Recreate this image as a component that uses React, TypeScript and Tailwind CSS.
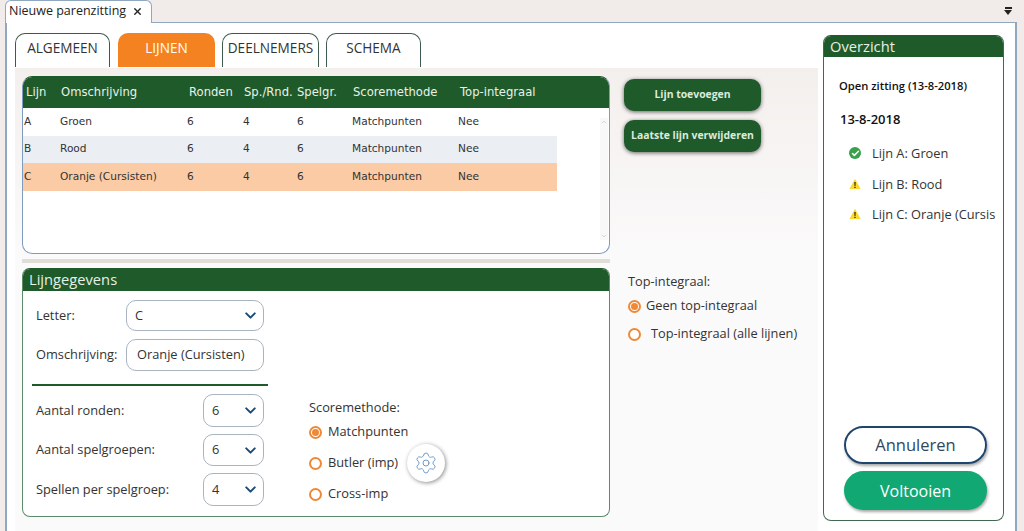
import { Check, ChevronDown, ChevronUp, Settings, X } from "lucide-react";

const sans = "font-['Open_Sans',sans-serif]";
const deja = "font-['DejaVu_Sans',sans-serif]";

const rows = [
  { id: "A", name: "Groen", bg: "bg-white" },
  { id: "B", name: "Rood", bg: "bg-[#ebeff3]" },
  { id: "C", name: "Oranje (Cursisten)", bg: "bg-[#fbcba5]" },
];

const Tab = ({ label, active, width }: { label: string; active?: boolean; width: string }) => (
  <div
    className={`${width} h-[34px] flex items-center justify-center pb-[4px] rounded-t-[10px] text-[13.6px] ${
      active
        ? "bg-[#f58220] text-white"
        : "bg-white text-[#333] border border-b-0 border-[#3f5a4c]"
    }`}
  >
    {label}
  </div>
);

const Select = ({ value, width, height }: { value: string; width: string; height: string }) => (
  <div
    className={`${width} ${height} flex items-center justify-between pl-2 pr-[4px] bg-white rounded-[10px] border border-[#a9b4c0] text-[12.8px] text-[#333]`}
  >
    <span>{value}</span>
    <ChevronDown size={17} strokeWidth={2.8} className="text-[#1c4a78]" />
  </div>
);

const Radio = ({ checked }: { checked?: boolean }) => (
  <span className="w-[13px] h-[13px] shrink-0 rounded-full border-2 border-[#ee8a37] bg-white flex items-center justify-center">
    {checked && <span className="w-[7px] h-[7px] rounded-full bg-[#ee8a37]" />}
  </span>
);

const Warning = () => (
  <svg width="12" height="12" viewBox="0 0 12 12" className="shrink-0">
    <path d="M6 .8 11.6 11H.4Z" fill="#fbd92f" />
    <path d="M5.3 4h1.4l-.2 4h-1ZM5.3 8.8h1.4v1.3H5.3Z" fill="#332b00" />
  </svg>
);

const GreenButton = ({ label }: { label: string }) => (
  <div className="w-[137px] h-8 flex items-center justify-center rounded-[10px] bg-[#1f5a2b] text-[#dcebdc] text-[10.4px] font-bold shadow-[0_1px_4px_rgba(0,0,0,0.6)]">
    {label}
  </div>
);

export default function App() {
  return (
    <div className={`${sans} w-[1024px] h-[531px] overflow-hidden bg-[#f1ece9] flex flex-col`}>
      {/* window tab strip */}
      <div className="h-[22px] shrink-0 flex justify-between pl-[5px] pr-[12px]">
        <div className="w-[147px] h-[23px] z-10 flex items-center gap-[6px] pl-[3px] pb-[2px] bg-white border border-b-0 border-[#8fa8c0] rounded-t-[6px] text-[12.5px] text-[#222]">
          <span>Nieuwe parenzitting</span>
          <X size={11} strokeWidth={3} className="text-[#222]" />
        </div>
        <div className="flex flex-col items-center pt-[7px] gap-px">
          <span className="w-[7px] h-[2px] bg-[#222]" />
          <span className="w-0 h-0 border-x-[4px] border-x-transparent border-t-[5px] border-t-[#222]" />
        </div>
      </div>

      <div className="ml-[5px] w-[1012px] flex-1 min-h-0 flex bg-white border-x-2 border-t border-[#8fa8c0]">
        <div className="w-[811px] shrink-0 flex flex-col">
          <div className="h-[45px] shrink-0 flex items-end pl-2 pb-px">
            <Tab label="ALGEMEEN" width="w-[95px]" />
            <div className="ml-[8px]">
              <Tab label="LIJNEN" width="w-[97px]" active />
            </div>
            <div className="ml-[7px] flex gap-[7px]">
              <Tab label="DEELNEMERS" width="w-[97px]" />
              <Tab label="SCHEMA" width="w-[95px]" />
            </div>
          </div>

          <div className="ml-2 flex-1 min-h-0 bg-[linear-gradient(#f3efed,#fbfafa_40%)] flex pt-[8px] pl-[7px]">
            <div className="w-[588px] shrink-0 flex flex-col">
              {/* lijnen table */}
              <div className={`${deja} h-[178px] bg-white rounded-[10px] border border-[#7d9cc0] border-t-[#1f5a2b] overflow-hidden text-[10.6px] text-[#333]`}>
                <div className="h-8 -mx-px -mt-px bg-[#1f5a2b] text-[#e8f2e8] flex items-center pt-[1px] text-[11.6px] whitespace-nowrap">
                  <span className="w-[39px] pl-[4px]">Lijn</span>
                  <span className="w-[128px]">Omschrijving</span>
                  <span className="w-[55px]">Ronden</span>
                  <span className="w-[53px]">Sp./Rnd.</span>
                  <span className="w-[56px]">Spelgr.</span>
                  <span className="w-[107px]">Scoremethode</span>
                  <span>Top-integraal</span>
                </div>
                <div className="flex">
                  <div className="w-[534px]">
                    {rows.map((r) => (
                      <div key={r.id} className={`h-[27.5px] flex items-center ${r.bg}`}>
                        <span className="w-[37px] pl-[1px]">{r.id}</span>
                        <span className="w-[127px]">{r.name}</span>
                        <span className="w-[56px]">6</span>
                        <span className="w-[54px]">4</span>
                        <span className="w-[55px]">6</span>
                        <span className="w-[106px]">Matchpunten</span>
                        <span>Nee</span>
                      </div>
                    ))}
                  </div>
                  <div className="ml-auto mt-[10px] mr-[1px] w-2 h-[122px] bg-[#f8f8f8] flex flex-col justify-between items-center text-[#c4c4c4]">
                    <ChevronUp size={8} />
                    <ChevronDown size={8} />
                  </div>
                </div>
              </div>

              <div className="h-1 mt-[5px] shrink-0 bg-[#e0ddd8]" />

              {/* lijngegevens */}
              <div className="mt-[5px] h-[249px] shrink-0 bg-white rounded-[8px] border border-[#5c8a6b] border-t-[#1f5a2b] overflow-hidden text-[12.8px] text-[#333]">
                <div className="h-[23px] -mx-px -mt-px bg-[#1f5a2b] text-[#e6f0e6] text-[14.7px] pl-[7px] leading-[23px]">
                  Lijngegevens
                </div>
                <div className="pl-[9px] pt-[9px]">
                  <div className="flex items-center pl-[4px] h-[31px]">
                    <span className="w-[90px]">Letter:</span>
                    <Select value="C" width="w-[138px]" height="h-[31px]" />
                  </div>
                  <div className="flex items-center pl-[4px] h-[32px] mt-[8px]">
                    <span className="w-[90px]">Omschrijving:</span>
                    <div className="w-[138px] h-[32px] flex items-center pl-[10px] rounded-[10px] border border-[#a9b4c0]">
                      Oranje (Cursisten)
                    </div>
                  </div>
                  <div className="w-[236px] h-[2px] bg-[#1f5a2b] mt-[13px]" />
                  <div className="flex mt-[8px]">
                    <div className="w-[232px] pl-[4px] flex flex-col gap-[7px]">
                      <div className="flex items-center justify-between h-[33px]">
                        <span>Aantal ronden:</span>
                        <Select value="6" width="w-[61px]" height="h-[33px]" />
                      </div>
                      <div className="flex items-center justify-between h-[32px]">
                        <span>Aantal spelgroepen:</span>
                        <Select value="6" width="w-[61px]" height="h-[32px]" />
                      </div>
                      <div className="flex items-center justify-between h-[33px]">
                        <span>Spellen per spelgroep:</span>
                        <Select value="4" width="w-[61px]" height="h-[33px]" />
                      </div>
                    </div>
                    <div className="ml-[45px] flex flex-col pt-[4px]">
                      <span className="h-[18px] leading-[18px]">Scoremethode:</span>
                      <div className="flex items-center gap-[6px] h-[18px] mt-[7px]">
                        <Radio checked />
                        <span>Matchpunten</span>
                      </div>
                      <div className="relative flex items-center gap-[6px] h-[18px] mt-[13px]">
                        <Radio />
                        <span>Butler (imp)</span>
                        <div className="absolute left-[98px] -top-[10px] w-[38px] h-[38px] rounded-full bg-white flex items-center justify-center shadow-[1px_1px_4px_rgba(0,0,0,0.45)]">
                          <Settings size={24} strokeWidth={1} className="text-[#6f9dcb]" />
                        </div>
                      </div>
                      <div className="flex items-center gap-[6px] h-[18px] mt-[13px]">
                        <Radio />
                        <span>Cross-imp</span>
                      </div>
                    </div>
                  </div>
                </div>
              </div>
            </div>

            {/* right actions */}
            <div className="ml-[14px] flex-1 flex flex-col text-[12.75px] text-[#333]">
              <div className="pt-[3px] flex flex-col gap-[9px]">
                <GreenButton label="Lijn toevoegen" />
                <GreenButton label="Laatste lijn verwijderen" />
              </div>
              <div className="mt-[120px] pl-[4px]">
                <div className="h-[18px] leading-[18px]">Top-integraal:</div>
                <div className="flex items-center gap-[5px] h-[18px] mt-[7px]">
                  <Radio checked />
                  <span>Geen top-integraal</span>
                </div>
                <div className="flex items-center gap-[10px] h-[18px] mt-[10px]">
                  <Radio />
                  <span>Top-integraal (alle lijnen)</span>
                </div>
              </div>
            </div>
          </div>
        </div>

        {/* overzicht */}
        <div className="pt-[12px] pl-[5px]">
          <div className="w-[181px] h-[486px] flex flex-col rounded-[8px] border border-[#3f6a50] border-t-[#1f5a2b] bg-white overflow-hidden">
            <div className="h-[22px] shrink-0 -mx-px -mt-px bg-[#1f5a2b] text-[#e6f0e6] text-[14.7px] leading-[23px] pl-[7px]">
              Overzicht
            </div>
            <div className="pl-[15px] pt-[21px] text-[#111] text-[11.2px] font-semibold whitespace-nowrap">Open zitting (13-8-2018)</div>
            <div className="pl-[16px] mt-[15px] text-[13px] font-semibold text-[#111]">13-8-2018</div>
            <div className="pl-[25px] mt-[15px] flex flex-col gap-[12px] text-[12.8px] text-[#333] whitespace-nowrap overflow-hidden">
              <div className="flex items-center gap-[11px] h-[18px]">
                <span className="w-3 h-3 rounded-full bg-[#3aa04a] flex items-center justify-center">
                  <Check size={9} strokeWidth={4} className="text-white" />
                </span>
                <span>Lijn A: Groen</span>
              </div>
              <div className="flex items-center gap-[11px] h-[18px] mt-px">
                <Warning />
                <span>Lijn B: Rood</span>
              </div>
              <div className="flex items-center gap-[11px] h-[18px]">
                <Warning />
                <span>Lijn C: Oranje (Cursis</span>
              </div>
            </div>
            <div className="mt-auto pl-[20px] pr-[16px] pb-[10px] flex flex-col gap-[7px]">
              <div className="h-[38px] flex items-center justify-center rounded-full border-2 border-[#1f456e] text-[#33475b] text-[16.5px] shadow-[1px_2px_3px_rgba(0,0,0,0.35)]">
                Annuleren
              </div>
              <div className="h-[39px] flex items-center justify-center rounded-full bg-[#11a873] text-white text-[16px] shadow-[1px_2px_3px_rgba(0,0,0,0.35)]">
                Voltooien
              </div>
            </div>
          </div>
        </div>
      </div>
    </div>
  );
}
